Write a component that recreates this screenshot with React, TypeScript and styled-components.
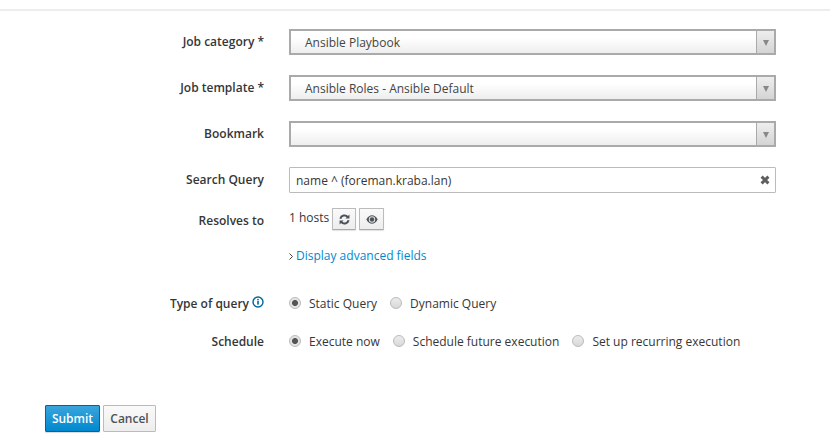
import React from 'react';
import styled, { createGlobalStyle } from 'styled-components';

const GlobalStyle = createGlobalStyle`
  html, body {
    margin: 0;
    padding: 0;
    background: #fff;
  }

  body {
    font-family: 'Open Sans', 'Liberation Sans', sans-serif;
    font-size: 12px;
    color: #363636;
    overflow: hidden;
  }
`;

const Page = styled.div`
  width: 830px;
  height: 437px;
  box-sizing: border-box;
  padding-top: 9px;
`;

const TopRule = styled.div`
  height: 2px;
  background: #ededed;
`;

const Form = styled.form`
  display: flex;
  flex-direction: column;
  padding-top: 18px;
`;

const Row = styled.div<{ $height: number; $mb: number }>`
  display: flex;
  align-items: center;
  height: ${(p) => p.$height}px;
  margin-bottom: ${(p) => p.$mb}px;
`;

const Label = styled.label<{ $pad?: string }>`
  width: 264px;
  margin-right: 25px;
  flex: none;
  box-sizing: border-box;
  display: flex;
  justify-content: flex-end;
  align-items: center;
  gap: 3px;
  padding: ${(p) => p.$pad ?? '0 0 2px'};
  font-weight: 600;
  color: #363636;
  white-space: nowrap;
`;

const Field = styled.div`
  width: 487px;
  flex: none;
  display: flex;
  align-items: center;
`;

const Select = styled.div`
  width: 100%;
  height: 26px;
  box-sizing: border-box;
  display: flex;
  align-items: stretch;
  border: 2px solid #aaa;
  background: linear-gradient(#fff 30%, #eeeeee 100%);
  color: #444;
`;

const SelectText = styled.div`
  flex: 1;
  padding: 1px 0 0 14px;
  line-height: 22px;
`;

const SelectArrow = styled.div`
  width: 17px;
  flex: none;
  border-left: 1px solid #aaa;
  background: linear-gradient(#eeeeee, #d4d4d4);
  display: flex;
  align-items: center;
  justify-content: center;

  &::after {
    content: '';
    width: 0;
    height: 0;
    margin-top: 2px;
    border-left: 3.5px solid transparent;
    border-right: 3.5px solid transparent;
    border-top: 6px solid #888;
  }
`;

const SearchBox = styled.div`
  width: 100%;
  height: 26px;
  box-sizing: border-box;
  display: flex;
  align-items: center;
  justify-content: space-between;
  border: 1px solid #bbb;
  border-radius: 1px;
  padding: 0 5px 0 6px;
  color: #363636;
`;

const ClearIcon = styled.svg`
  width: 10px;
  height: 10px;
  color: #5f5f5f;
`;

const HostCount = styled.span`
  margin-right: 3px;
  padding-bottom: 4px;
`;

const IconButton = styled.button<{ $width: number }>`
  width: ${(p) => p.$width}px;
  height: 22px;
  box-sizing: border-box;
  margin-right: 3px;
  padding: 0;
  display: flex;
  align-items: center;
  justify-content: center;
  border: 1px solid #bbb;
  border-bottom-color: #aaa;
  border-radius: 1px;
  background: linear-gradient(#fafafa, #ededed);
  box-shadow: 0 1px 1px rgba(0, 0, 0, 0.12);
  color: #4d5258;
`;

const AdvancedLink = styled.a`
  display: flex;
  align-items: center;
  gap: 3px;
  color: #0088ce;
  text-decoration: none;
`;

const Chevron = styled.svg`
  width: 4px;
  height: 7px;
  margin-top: 2px;
  color: #444;
`;

const InfoIcon = styled.svg`
  width: 12px;
  height: 12px;
  margin-bottom: 2px;
  color: #00659c;
`;

const RadioOption = styled.span<{ $mr: number }>`
  display: inline-flex;
  align-items: center;
  margin-right: ${(p) => p.$mr}px;
  color: #363636;
  white-space: nowrap;
`;

const RadioDot = styled.span<{ $on?: boolean }>`
  width: 12px;
  height: 12px;
  box-sizing: border-box;
  margin-right: 8px;
  flex: none;
  border-radius: 50%;
  border: 1px solid #bbb;
  background: ${(p) =>
    p.$on
      ? 'radial-gradient(circle, #555 0, #555 2.6px, #e4e4e4 3.4px)'
      : 'linear-gradient(#ececec, #d8d8d8)'};
`;

const Actions = styled.div`
  display: flex;
  gap: 3px;
  padding-left: 45px;
  margin-top: 54px;
`;

const PrimaryButton = styled.button`
  width: 55px;
  height: 27px;
  padding: 0;
  font: 600 12px 'Open Sans', 'Liberation Sans', sans-serif;
  color: #fff;
  border: 1px solid #00659c;
  border-radius: 1px;
  background: linear-gradient(#39a5dc, #0088ce);
  box-shadow: 0 1px 1px rgba(0, 0, 0, 0.15);
`;

const DefaultButton = styled.button`
  width: 53px;
  height: 27px;
  padding: 0;
  font: 600 12px 'Open Sans', 'Liberation Sans', sans-serif;
  color: #4d5258;
  border: 1px solid #bbb;
  border-radius: 1px;
  background: linear-gradient(#fafafa, #ededed);
`;

const App: React.FC = () => (
  <Page>
    <GlobalStyle />
    <TopRule />
    <Form>
      <Row $height={26} $mb={20}>
        <Label>Job category *</Label>
        <Field>
          <Select>
            <SelectText>Ansible Playbook</SelectText>
            <SelectArrow />
          </Select>
        </Field>
      </Row>
      <Row $height={26} $mb={20}>
        <Label>Job template *</Label>
        <Field>
          <Select>
            <SelectText>Ansible Roles - Ansible Default</SelectText>
            <SelectArrow />
          </Select>
        </Field>
      </Row>
      <Row $height={26} $mb={20}>
        <Label>Bookmark</Label>
        <Field>
          <Select>
            <SelectText />
            <SelectArrow />
          </Select>
        </Field>
      </Row>
      <Row $height={26} $mb={15}>
        <Label>Search Query</Label>
        <Field>
          <SearchBox>
            <span>name ^ (foreman.kraba.lan)</span>
            <ClearIcon viewBox="0 0 10 10">
              <path d="M1.6 1.6 L8.4 8.4 M8.4 1.6 L1.6 8.4" stroke="currentColor" strokeWidth="3" fill="none" />
            </ClearIcon>
          </SearchBox>
        </Field>
      </Row>
      <Row $height={22} $mb={15}>
        <Label $pad="2px 0 0">Resolves to</Label>
        <Field>
          <HostCount>1 hosts</HostCount>
          <IconButton type="button" $width={24}>
            <svg width="11" height="11" viewBox="0 0 12 12" fill="none" stroke="currentColor" strokeWidth="2.2">
              <path d="M1.5 5.2 A4.6 4.6 0 0 1 9.6 3.4" />
              <path d="M10.5 6.8 A4.6 4.6 0 0 1 2.4 8.6" />
              <path d="M11.4 0.6 V5 H7 Z" fill="currentColor" stroke="none" />
              <path d="M0.6 11.4 V7 H5 Z" fill="currentColor" stroke="none" />
            </svg>
          </IconButton>
          <IconButton type="button" $width={25}>
            <svg width="12" height="9" viewBox="0 0 12 9">
              <path d="M0.3 4.5 C2 1.4 4 0.3 6 0.3 C8 0.3 10 1.4 11.7 4.5 C10 7.6 8 8.7 6 8.7 C4 8.7 2 7.6 0.3 4.5 Z" fill="#4d5258" />
              <circle cx="6" cy="4.5" r="3.2" fill="#e4e4e4" />
              <circle cx="6" cy="4.5" r="2.2" fill="#4d5258" />
            </svg>
          </IconButton>
        </Field>
      </Row>
      <Row $height={20} $mb={28}>
        <Label />
        <Field>
          <AdvancedLink href="#">
            <Chevron viewBox="0 0 4 7">
              <path d="M0.5 0.5 L3.5 3.5 L0.5 6.5" stroke="currentColor" fill="none" />
            </Chevron>
            Display advanced fields
          </AdvancedLink>
        </Field>
      </Row>
      <Row $height={20} $mb={18}>
        <Label $pad="0">
          Type of query
          <InfoIcon viewBox="0 0 12 12">
            <circle cx="6" cy="6" r="5" fill="none" stroke="currentColor" strokeWidth="1.4" />
            <rect x="5.2" y="5" width="1.6" height="3.6" fill="currentColor" />
            <rect x="5.2" y="2.9" width="1.6" height="1.4" fill="currentColor" />
          </InfoIcon>
        </Label>
        <Field>
          <RadioOption $mr={13}>
            <RadioDot $on />
            Static Query
          </RadioOption>
          <RadioOption $mr={0}>
            <RadioDot />
            Dynamic Query
          </RadioOption>
        </Field>
      </Row>
      <Row $height={20} $mb={0}>
        <Label $pad="0">Schedule</Label>
        <Field>
          <RadioOption $mr={13}>
            <RadioDot $on />
            Execute now
          </RadioOption>
          <RadioOption $mr={13}>
            <RadioDot />
            Schedule future execution
          </RadioOption>
          <RadioOption $mr={0}>
            <RadioDot />
            Set up recurring execution
          </RadioOption>
        </Field>
      </Row>
      <Actions>
        <PrimaryButton type="button">Submit</PrimaryButton>
        <DefaultButton type="button">Cancel</DefaultButton>
      </Actions>
    </Form>
  </Page>
);

export default App;
